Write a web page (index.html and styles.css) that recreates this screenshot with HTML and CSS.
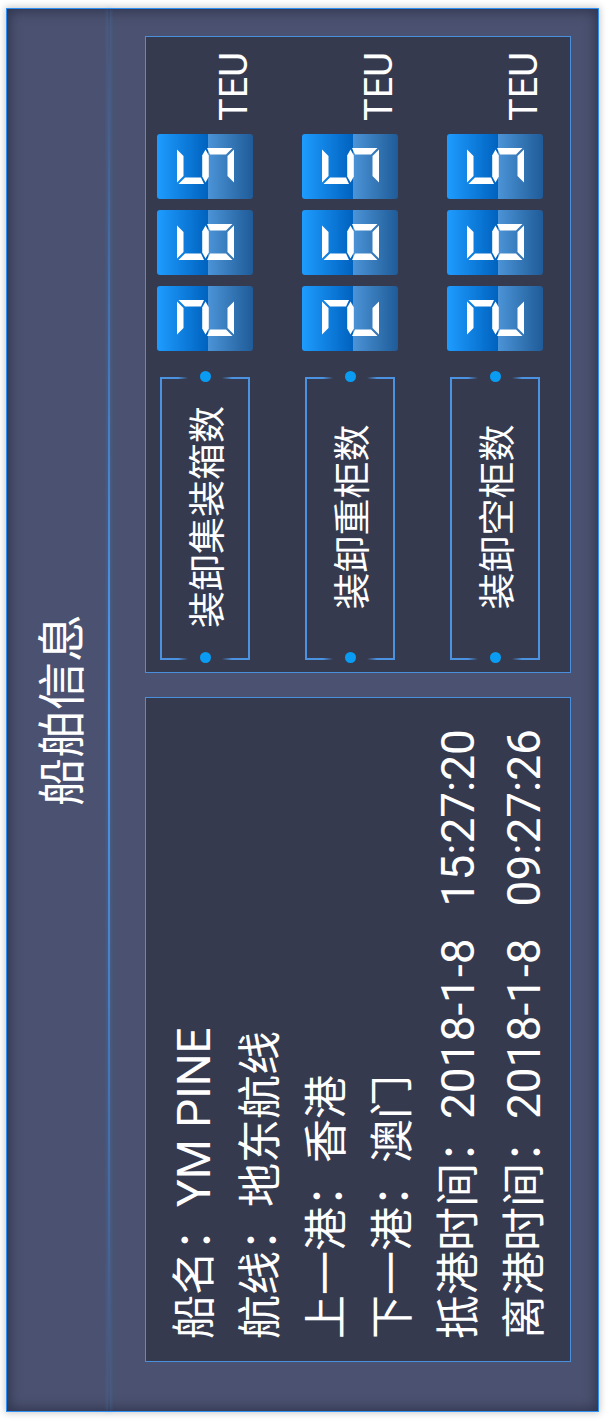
FILE: index.html
```html
<!DOCTYPE html>
<html lang="zh-CN">
<head>
<meta charset="utf-8">
<title>船舶信息</title>
<link rel="stylesheet" href="styles.css">
</head>
<body>
<svg class="defs" width="0" height="0" aria-hidden="true">
  <defs>
    <polygon id="sa" points="1.5,0 34.5,0 28,6.5 8,6.5"/>
    <polygon id="sb" points="36,1.5 36,27 29.5,24 29.5,8"/>
    <polygon id="sf" points="0,1.5 6.5,8 6.5,24 0,27"/>
    <polygon id="sg" points="1.5,28.5 7.5,25.2 28.5,25.2 34.5,28.5 28.5,31.8 7.5,31.8"/>
    <polygon id="se" points="0,30 6.5,33 6.5,49 0,55.5"/>
    <polygon id="sc" points="36,30 36,55.5 29.5,49 29.5,33"/>
    <polygon id="sd" points="1.5,57 8,50.5 28,50.5 34.5,57"/>
    <symbol id="d2" viewBox="0 0 36 57"><use href="#sa"/><use href="#sb"/><use href="#sg"/><use href="#se"/><use href="#sd"/></symbol>
    <symbol id="d6" viewBox="0 0 36 57"><use href="#sa"/><use href="#sf"/><use href="#sg"/><use href="#se"/><use href="#sd"/><use href="#sc"/></symbol>
    <symbol id="d5" viewBox="0 0 36 57"><use href="#sa"/><use href="#sf"/><use href="#sg"/><use href="#sc"/><use href="#sd"/></symbol>
  </defs>
</svg>
<div class="viewport">
<div class="stage">
  <div class="panel">
    <div class="head">船舶信息</div>
    <div class="divider"></div>
    <div class="content">
      <div class="info">
        <div class="line">船名<span class="colon">：</span><span class="en">YM PINE</span></div>
        <div class="line">航线<span class="colon">：</span>地东航线</div>
        <div class="line">上一港<span class="colon">：</span>香港</div>
        <div class="line">下一港<span class="colon">：</span>澳门</div>
        <div class="line">抵港时间<span class="colon">：</span><span class="en">2018-1-8</span><span class="en time">15:27:20</span></div>
        <div class="line">离港时间<span class="colon">：</span><span class="en">2018-1-8</span><span class="en time">09:27:26</span></div>
      </div>
      <div class="stats">
        <div class="row">
          <div class="label"><span class="dot dot-l"></span><span class="txt">装卸集装箱数</span><span class="dot dot-r"></span></div>
          <div class="digits">
            <div class="digit"><svg class="seg" viewBox="0 0 36 57"><use href="#d2"/></svg></div>
            <div class="digit"><svg class="seg" viewBox="0 0 36 57"><use href="#d6"/></svg></div>
            <div class="digit"><svg class="seg" viewBox="0 0 36 57"><use href="#d5"/></svg></div>
          </div>
          <div class="teu">TEU</div>
        </div>
        <div class="row">
          <div class="label"><span class="dot dot-l"></span><span class="txt">装卸重柜数</span><span class="dot dot-r"></span></div>
          <div class="digits">
            <div class="digit"><svg class="seg" viewBox="0 0 36 57"><use href="#d2"/></svg></div>
            <div class="digit"><svg class="seg" viewBox="0 0 36 57"><use href="#d6"/></svg></div>
            <div class="digit"><svg class="seg" viewBox="0 0 36 57"><use href="#d5"/></svg></div>
          </div>
          <div class="teu">TEU</div>
        </div>
        <div class="row">
          <div class="label"><span class="dot dot-l"></span><span class="txt">装卸空柜数</span><span class="dot dot-r"></span></div>
          <div class="digits">
            <div class="digit"><svg class="seg" viewBox="0 0 36 57"><use href="#d2"/></svg></div>
            <div class="digit"><svg class="seg" viewBox="0 0 36 57"><use href="#d6"/></svg></div>
            <div class="digit"><svg class="seg" viewBox="0 0 36 57"><use href="#d5"/></svg></div>
          </div>
          <div class="teu">TEU</div>
        </div>
      </div>
    </div>
  </div>
</div>
</div>
</body>
</html>
```
FILE: styles.css
```css
html, body {
  margin: 0;
  padding: 0;
  width: 611px;
  height: 1421px;
  overflow: hidden;
  background: #ffffff;
}

.defs {
  display: block;
  width: 0;
  height: 0;
  overflow: hidden;
}

.viewport {
  width: 611px;
  height: 1421px;
  overflow: hidden;
}

.stage {
  width: 1421px;
  height: 611px;
  box-sizing: border-box;
  padding: 6px 0 0 9px;
  transform-origin: 0 0;
  transform: translate(0, 1421px) rotate(-90deg);
  font-family: "Noto Sans CJK SC", sans-serif;
  color: #ffffff;
}

.panel {
  width: 1404px;
  height: 593px;
  box-sizing: border-box;
  border: 1px solid #2f8ff2;
  background: #4b5271;
  box-shadow: 0 0 7px 1px rgba(0, 0, 0, 0.22), inset 0 0 12px 3px rgba(28, 32, 52, 0.55);
  display: flex;
  flex-direction: column;
}

.head {
  height: 101px;
  display: flex;
  align-items: center;
  justify-content: center;
  font-size: 48px;
  line-height: 1;
}

.divider {
  height: 2px;
  background: linear-gradient(90deg, rgba(60, 143, 232, 0) 0%, rgba(60, 143, 232, 0.5) 20%, #4a9cf0 50%, rgba(60, 143, 232, 0.5) 80%, rgba(60, 143, 232, 0) 100%);
  box-shadow: 0 0 4px rgba(60, 143, 232, 0.5);
}

.content {
  flex: 1;
  display: flex;
  gap: 24px;
  padding: 35px 27px 0 49px;
}

.info {
  width: 665px;
  height: 426px;
  box-sizing: border-box;
  border: 1px solid #4a8fdc;
  background: #363a4f;
  padding: 12px 0 0 22px;
  font-size: 44px;
  line-height: 66px;
}

.line {
  height: 66px;
  white-space: nowrap;
}

.colon {
  font-family: "Noto Sans CJK TC", sans-serif;
}

.en {
  font-family: Roboto, sans-serif;
  font-size: 46px;
  line-height: 1;
}

.time {
  margin-left: 32px;
}

.stats {
  width: 637px;
  height: 426px;
  box-sizing: border-box;
  border: 1px solid #4a8fdc;
  background: #363a4f;
  padding: 11px 0 0 12px;
  display: flex;
  flex-direction: column;
  gap: 49px;
}

.row {
  height: 96px;
  display: flex;
  align-items: center;
}

.label {
  width: 283px;
  height: 90px;
  flex: none;
  display: flex;
  align-items: center;
  background:
    linear-gradient(#4b92e0, #4b92e0) top / 100% 2px no-repeat,
    linear-gradient(#4b92e0, #4b92e0) bottom / 100% 2px no-repeat,
    linear-gradient(180deg, #4b92e0 0, #4b92e0 18px, rgba(75, 146, 224, 0) 28px, rgba(75, 146, 224, 0) 62px, #4b92e0 72px, #4b92e0 100%) left / 2px 100% no-repeat,
    linear-gradient(180deg, #4b92e0 0, #4b92e0 18px, rgba(75, 146, 224, 0) 28px, rgba(75, 146, 224, 0) 62px, #4b92e0 72px, #4b92e0 100%) right / 2px 100% no-repeat;
}

.dot {
  width: 11px;
  height: 11px;
  border-radius: 50%;
  background: #0a9cf2;
  flex: none;
}

.dot-l {
  margin-left: -3px;
}

.dot-r {
  margin-right: -6px;
}

.txt {
  flex: 1;
  text-align: center;
  font-size: 37px;
  line-height: 1;
}

.digits {
  display: flex;
  gap: 11px;
  margin-left: 26px;
}

.digit {
  width: 65px;
  height: 96px;
  border-radius: 3px;
  background: linear-gradient(180deg, #1e9cff 0%, #0062bf 53%, #4b94d7 53%, #1f5b98 100%);
  display: flex;
  align-items: center;
  justify-content: center;
}

.seg {
  width: 36px;
  height: 57px;
  fill: #ffffff;
}

.teu {
  align-self: flex-end;
  margin-left: 13px;
  font-family: Roboto, sans-serif;
  font-size: 38px;
  line-height: 1;
}
```
